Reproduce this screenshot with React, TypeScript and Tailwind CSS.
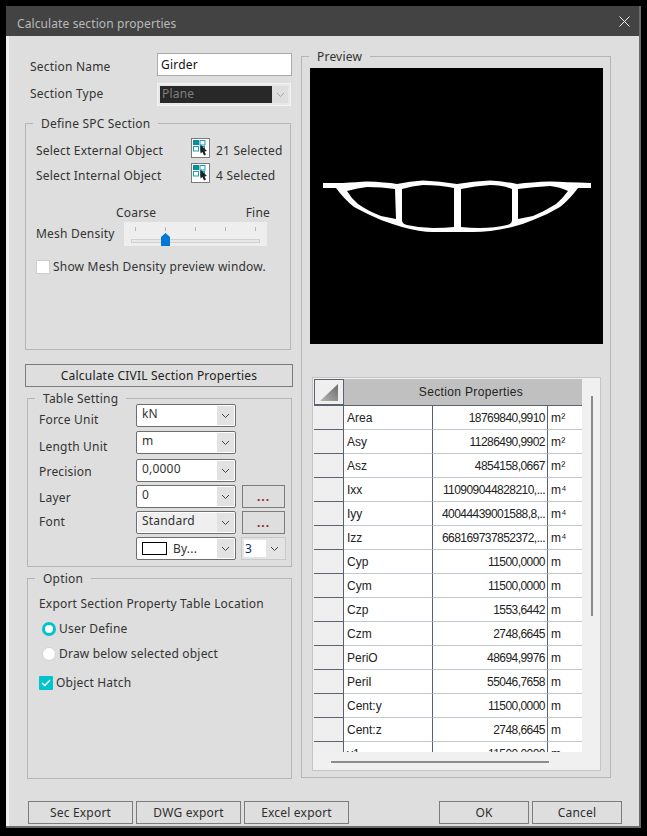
import React from "react";

const Chevron = ({ color = "#444" }: { color?: string }) => (
  <svg width="9" height="6" viewBox="0 0 9 6" fill="none">
    <path d="M1 1L4.5 4.5L8 1" stroke={color} strokeWidth="1" />
  </svg>
);

const Legend = ({ text }: { text: string }) => (
  <span className="absolute -top-[9px] left-[7px] bg-[#dedede] px-[8px] leading-[17px]">{text}</span>
);

const PickIcon = () => (
  <svg width="19" height="20" viewBox="0 0 19 20" className="block shrink-0">
    <rect x="0.5" y="0.5" width="18" height="19" fill="#fff" stroke="#7a7a7a" />
    <rect x="2" y="2" width="6" height="5" fill="#0b8ba0" />
    <rect x="9" y="2.5" width="5" height="4.5" fill="#fff" stroke="#12a0b4" />
    <rect x="2.5" y="8.5" width="5" height="4.5" fill="#fff" stroke="#12a0b4" />
    <rect x="9.5" y="8.5" width="4" height="4.5" fill="#fff" stroke="#12a0b4" />
    <path d="M9.5 6.5L9.5 15.5L11.5 14L13 17.5L15 16.5L13.5 13.5L16 13Z" fill="#222" />
  </svg>
);

const Combo = ({ children, bg = "bg-white" }: { children: React.ReactNode; bg?: string }) => (
  <div className="flex h-[23px] w-[100px] items-stretch rounded-[2px] border border-[#6e6e6e] bg-white p-[1px]">
    <div className={`flex flex-1 items-start pl-[4px] leading-[15px] ${bg}`}>{children}</div>
    <div className="flex w-[17px] items-center justify-center bg-[#e2e2e2]">
      <Chevron />
    </div>
  </div>
);

const Btn = ({ children, w }: { children: React.ReactNode; w: string }) => (
  <button className={`h-[23px] ${w} border border-[#7c7c7c] bg-[#dedede] text-center leading-[21px] text-[#2e2e2e]`}>
    {children}
  </button>
);

const rows: [string, string, string][] = [
  ["Area", "18769840,9910", "m²"],
  ["Asy", "11286490,9902", "m²"],
  ["Asz", "4854158,0667", "m²"],
  ["Ixx", "110909044828210,...", "m⁴"],
  ["Iyy", "40044439001588,8,..", "m⁴"],
  ["Izz", "668169737852372,...", "m⁴"],
  ["Cyp", "11500,0000", "m"],
  ["Cym", "11500,0000", "m"],
  ["Czp", "1553,6442", "m"],
  ["Czm", "2748,6645", "m"],
  ["PeriO", "48694,9976", "m"],
  ["PeriI", "55046,7658", "m"],
  ["Cent:y", "11500,0000", "m"],
  ["Cent:z", "2748,6645", "m"],
  ["y1", "11500,0000", "m"],
];

const TableLabelRow = ({
  label,
  h,
  pt = "pt-[4px]",
  children,
}: {
  label?: string;
  h: string;
  pt?: string;
  children: React.ReactNode;
}) => (
  <div className={`flex ${h} items-start`}>
    <span className={`w-[97px] ${pt} leading-[17px]`}>{label}</span>
    {children}
  </div>
);

const dots = <span className="font-bold tracking-[1px] text-[#8a2a1a]">...</span>;

export default function App() {
  return (
    <div
      className="h-[836px] w-[647px] overflow-hidden bg-black pl-[6px] pt-[6px] text-[12px] tracking-[0.2px] text-[#333]"
      style={{ fontFamily: '"Noto Sans", sans-serif' }}
    >
      <div className="flex h-[822px] w-[635px] flex-col border-b-[2px] border-r-[2px] border-[#6a6a6a] bg-[#dedede]">
        <div className="flex h-[30px] shrink-0 items-center justify-between bg-[#434343] pl-[11px] pr-[9px] text-[12px] tracking-[0.1px] text-[#b9b9b9]">
          <span className="pt-[5px]">Calculate section properties</span>
          <svg width="11" height="11" viewBox="0 0 11 11" fill="none" className="mt-[1px]">
            <path d="M0.5 0.5L10.5 10.5M10.5 0.5L0.5 10.5" stroke="#eee" strokeWidth="1" />
          </svg>
        </div>

        <div className="flex min-h-0 flex-1 flex-col border-l-[3px] border-[#f1f1f1]">
          <div className="flex h-[752px] shrink-0 pl-[16px] pt-[12px]">
            {/* left column */}
            <div className="flex w-[268px] flex-col pt-[5px]">
              <div className="flex h-[30px] pl-[5px]">
                <span className="w-[127px] pt-[5px] leading-[17px]">Section Name</span>
                <div className="h-[23px] w-[135px] border border-[#a9a9a9] bg-white pl-[3px] leading-[21px] text-[#111]">
                  Girder
                </div>
              </div>
              <div className="flex h-[40px] pl-[5px]">
                <span className="w-[127px] pt-[2px] leading-[17px]">Section Type</span>
                <div className="flex h-[23px] w-[134px] items-stretch border border-[#f4f4f4] bg-[#e8e8e8] p-[2px]">
                  <div className="flex-1 bg-[#282828] pl-[2px] leading-[15px] text-[#7e7e7e]">Plane</div>
                  <div className="flex w-[16px] items-center justify-center bg-[#dedede]">
                    <Chevron color="#a8a8a8" />
                  </div>
                </div>
              </div>

              <div className="relative h-[227px] w-[266px] border border-[#b5b5b5] pl-[10px] pt-[14px]">
                <Legend text="Define SPC Section" />
                <div className="flex h-[25px] items-start">
                  <span className="w-[155px] pt-[4px] leading-[17px]">Select External Object</span>
                  <PickIcon />
                  <span className="pl-[6px] pt-[4px] leading-[17px]">21 Selected</span>
                </div>
                <div className="flex h-[25px] items-start">
                  <span className="w-[155px] pt-[4px] leading-[17px]">Select Internal Object</span>
                  <PickIcon />
                  <span className="pl-[6px] pt-[4px] leading-[17px]">4 Selected</span>
                </div>
                <div className="mt-[12px] flex h-[16px] justify-between pl-[80px] pr-[20px] pt-[4px] leading-[17px]">
                  <span>Coarse</span>
                  <span>Fine</span>
                </div>
                <div className="mt-[6px] flex h-[24px] items-center">
                  <span className="w-[88px]">Mesh Density</span>
                  <div className="relative h-[24px] w-[143px] bg-[#eeeeee]">
                    <div className="flex justify-between px-[11px] pt-[5px]">
                      {[0, 1, 2, 3, 4].map((i) => (
                        <span key={i} className="h-[4px] w-[1px] bg-[#b4b4b4]" />
                      ))}
                    </div>
                    <div className="mx-[7px] mt-[8px] h-[4px] border border-[#d0d0d0] bg-[#e8e8e8]" />
                    <svg width="9" height="13" viewBox="0 0 9 13" className="absolute left-[37px] top-[11px]">
                      <path d="M0 4L4.5 0L9 4V13H0Z" fill="#0078d7" />
                    </svg>
                  </div>
                </div>
                <div className="mt-[12px] flex items-center">
                  <span className="h-[14px] w-[14px] border border-[#cfcfcf] bg-white" />
                  <span className="pl-[3px] leading-[17px]">Show Mesh Density preview window.</span>
                </div>
              </div>

              <button className="mt-[14px] h-[23px] w-[268px] border border-[#7c7c7c] bg-[#dedede] text-center leading-[21px] text-[#222]">
                Calculate CIVIL Section Properties
              </button>

              <div className="relative ml-[2px] mt-[11px] h-[169px] w-[265px] border border-[#b5b5b5] pl-[11px] pt-[5px]">
                <Legend text="Table Setting" />
                <TableLabelRow label="Force Unit" h="h-[27px]" pt="pt-[7px]">
                  <Combo>kN</Combo>
                </TableLabelRow>
                <TableLabelRow label="Length Unit" h="h-[28px]" pt="pt-[7px]">
                  <Combo>m</Combo>
                </TableLabelRow>
                <TableLabelRow label="Precision" h="h-[26px]">
                  <Combo>0,0000</Combo>
                </TableLabelRow>
                <TableLabelRow label="Layer" h="h-[26px]">
                  <Combo>0</Combo>
                  <div className="ml-[6px]">
                    <Btn w="w-[43px]">{dots}</Btn>
                  </div>
                </TableLabelRow>
                <TableLabelRow label="Font" h="h-[26px]" pt="pt-[2px]">
                  <Combo bg="bg-[#efefef]">Standard</Combo>
                  <div className="ml-[6px]">
                    <Btn w="w-[43px]">{dots}</Btn>
                  </div>
                </TableLabelRow>
                <TableLabelRow h="h-[24px]">
                  <div className="flex h-[23px] w-[100px] items-stretch rounded-[2px] border border-[#6e6e6e] bg-white p-[1px]">
                    <div className="flex flex-1 items-center pl-[4px]">
                      <span className="h-[13px] w-[25px] border border-black bg-white" />
                      <span className="pl-[6px]">By...</span>
                    </div>
                    <div className="flex w-[17px] items-center justify-center bg-[#e2e2e2]">
                      <Chevron />
                    </div>
                  </div>
                  <div className="ml-[5px] flex h-[23px] w-[45px] items-stretch border border-[#c8c8c8] bg-[#e4e4e4] p-[2px]">
                    <div className="w-[22px] bg-white pl-[1px] leading-[17px] text-[#0b2a6a]">3</div>
                    <div className="flex flex-1 items-center justify-center">
                      <Chevron />
                    </div>
                  </div>
                </TableLabelRow>
              </div>

              <div className="relative ml-[2px] mt-[11px] h-[201px] w-[265px] border border-[#b5b5b5] pl-[11px] pt-[16px]">
                <Legend text="Option" />
                <div className="leading-[17px]">Export Section Property Table Location</div>
                <div className="ml-[3px] mt-[9px] flex h-[15px] items-center">
                  <span className="h-[14px] w-[14px] rounded-full border-[3px] border-[#00c4cc] bg-white" />
                  <span className="pl-[3px]">User Define</span>
                </div>
                <div className="ml-[3px] mt-[10px] flex h-[15px] items-center">
                  <span className="h-[14px] w-[14px] rounded-full border border-[#d2d2d2] bg-white" />
                  <span className="pl-[3px]">Draw below selected object</span>
                </div>
                <div className="mt-[14px] flex h-[15px] items-center">
                  <span className="flex h-[14px] w-[14px] items-center justify-center rounded-[1px] bg-[#00c4cc]">
                    <svg width="10" height="8" viewBox="0 0 10 8" fill="none">
                      <path d="M1 4L3.8 6.5L9 1" stroke="#fff" strokeWidth="1.4" />
                    </svg>
                  </span>
                  <span className="pl-[3px]">Object Hatch</span>
                </div>
              </div>
            </div>

            {/* right column */}
            <div className="relative ml-[8px] mt-[8px] h-[722px] w-[310px] border border-[#b5b5b5] px-[8px] pt-[11px]">
              <Legend text="Preview" />
              <div className="h-[276px] w-[293px] bg-black">
                <svg width="293" height="276" viewBox="310 68 293 276" className="block">
                  <path
                    fillRule="evenodd"
                    fill="#fff"
                    d="M323 183L343 183Q357 182 367 181.5Q385 182 397 184Q410 181 423 180.5Q440 181 457 184Q473 181 490 180.5Q503 181 517 184Q532 182 550 181.5Q565 182 591 183L591 188L578 188Q570 199 560 207Q547 215 533 220Q524 224 512 227Q490 232 473 232L433 232Q420 232 402 227Q392 224 381 220Q367 214 354 207Q344 199 336 188L323 188Z
                    M347 191Q358 188 367 187Q382 187 395 189L396 219L381 216Q368 211 358 204Q351 198 347 191Z
                    M402 189Q412 186 423 185Q440 185 454 188L454 227Q445 228 433 228Q420 228 407 225Q402 224 402 220Z
                    M461 189Q475 186 490 185Q502 185 512 189L512 220Q512 224 507 225Q495 228 480 228Q470 228 461 227Z
                    M518 189Q533 187 550 186Q560 187 568 191Q563 198 556 204Q545 211 533 216L518 219Z"
                  />
                </svg>
              </div>

              <div className="relative ml-[2px] mt-[33px] h-[394px] w-[289px] border border-[#c4c4c4] bg-[#f0f0f0] p-[1px]">
                <div
                  className="h-[373px] w-[268px] overflow-hidden bg-white"
                  style={{ fontFamily: '"Liberation Sans", sans-serif' }}
                >
                  <div className="flex h-[27px] border-b border-[#5a6270]">
                    <div className="flex w-[30px] items-center justify-center border border-[#5a6270] bg-[#efefef]">
                      <svg width="19" height="19" viewBox="0 0 19 19">
                        <defs>
                          <linearGradient id="tri" x1="0" y1="1" x2="1" y2="0">
                            <stop offset="0" stopColor="#b5b5b5" />
                            <stop offset="1" stopColor="#6b6b6b" />
                          </linearGradient>
                        </defs>
                        <path d="M0 18L18 1V18Z" fill="url(#tri)" />
                      </svg>
                    </div>
                    <div className="flex flex-1 items-center justify-center bg-[#c0c0c0] pl-[16px] tracking-[0.35px] text-[#222]">
                      Section Properties
                    </div>
                  </div>
                  {rows.map(([a, b, c]) => (
                    <div key={a} className="flex h-[24px] shrink-0">
                      <div className="w-[30px] border-b border-r border-b-[#5a6270] border-r-[#5a6270] bg-[#efefef]" />
                      <div className="w-[89px] border-b border-r border-b-[#c2c8d2] border-r-[#5a6270] pl-[3px] leading-[25px] tracking-[0px] text-[#222]">
                        {a}
                      </div>
                      <div className="w-[115px] overflow-hidden whitespace-nowrap border-b border-r border-b-[#c2c8d2] border-r-[#5a6270] pr-[2px] text-right leading-[25px] tracking-[-0.55px] text-[#222]">
                        {b}
                      </div>
                      <div className="flex-1 border-b border-[#c2c8d2] pl-[3px] leading-[25px] text-[#222]">{c}</div>
                    </div>
                  ))}
                </div>
                <div className="absolute left-[278px] top-[18px] h-[220px] w-[2px] bg-[#8c8c8c]" />
                <div className="absolute left-[18px] top-[383px] h-[2px] w-[218px] bg-[#8c8c8c]" />
              </div>
            </div>
          </div>

          <div className="flex pl-[19px] pt-[13px]">
            <div className="flex gap-[3px]">
              <Btn w="w-[105px]">Sec Export</Btn>
              <Btn w="w-[105px]">DWG export</Btn>
              <Btn w="w-[105px]">Excel export</Btn>
            </div>
            <div className="ml-[90px] flex gap-[3px]">
              <Btn w="w-[90px]">OK</Btn>
              <Btn w="w-[90px]">Cancel</Btn>
            </div>
          </div>
        </div>
      </div>
    </div>
  );
}
